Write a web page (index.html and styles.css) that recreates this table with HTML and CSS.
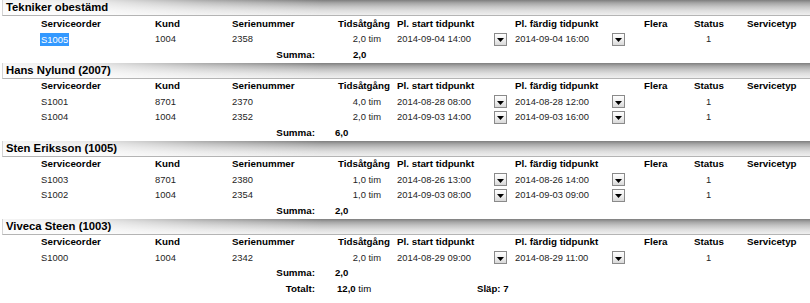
FILE: index.html
```html
<!DOCTYPE html>
<html lang="sv">
<head>
<meta charset="utf-8">
<title>Servicerapport</title>
<link rel="stylesheet" href="styles.css">
</head>
<body>
<div class="report">

  <section class="group">
    <div class="group-title">Tekniker obestämd</div>
    <div class="row head">
      <span class="c-order">Serviceorder</span><span class="c-kund">Kund</span><span class="c-serie">Serienummer</span><span class="c-tid">Tidsåtgång</span><span class="c-start">Pl. start tidpunkt</span><span class="c-fard">Pl. färdig tidpunkt</span><span class="c-flera">Flera</span><span class="c-status">Status</span><span class="c-typ">Servicetyp</span>
    </div>
    <div class="row">
      <span class="c-order"><span class="selected">S1005</span></span><span class="c-kund">1004</span><span class="c-serie">2358</span><span class="c-tid">2,0 tim</span><span class="c-start">2014-09-04 14:00</span><span class="c-btn1"><span class="dd"><svg viewBox="0 0 7 4" width="7" height="4"><path d="M0 0h7L3.5 4z"/></svg></span></span><span class="c-fard">2014-09-04 16:00</span><span class="c-btn2"><span class="dd"><svg viewBox="0 0 7 4" width="7" height="4"><path d="M0 0h7L3.5 4z"/></svg></span></span><span class="c-status">1</span>
    </div>
    <div class="row sum">
      <span class="c-label">Summa:</span><span class="c-val shift">2,0</span>
    </div>
  </section>

  <section class="group">
    <div class="group-title">Hans Nylund (2007)</div>
    <div class="row head">
      <span class="c-order">Serviceorder</span><span class="c-kund">Kund</span><span class="c-serie">Serienummer</span><span class="c-tid">Tidsåtgång</span><span class="c-start">Pl. start tidpunkt</span><span class="c-fard">Pl. färdig tidpunkt</span><span class="c-flera">Flera</span><span class="c-status">Status</span><span class="c-typ">Servicetyp</span>
    </div>
    <div class="row">
      <span class="c-order">S1001</span><span class="c-kund">8701</span><span class="c-serie">2370</span><span class="c-tid">4,0 tim</span><span class="c-start">2014-08-28 08:00</span><span class="c-btn1"><span class="dd"><svg viewBox="0 0 7 4" width="7" height="4"><path d="M0 0h7L3.5 4z"/></svg></span></span><span class="c-fard">2014-08-28 12:00</span><span class="c-btn2"><span class="dd"><svg viewBox="0 0 7 4" width="7" height="4"><path d="M0 0h7L3.5 4z"/></svg></span></span><span class="c-status">1</span>
    </div>
    <div class="row">
      <span class="c-order">S1004</span><span class="c-kund">1004</span><span class="c-serie">2352</span><span class="c-tid">2,0 tim</span><span class="c-start">2014-09-03 14:00</span><span class="c-btn1"><span class="dd"><svg viewBox="0 0 7 4" width="7" height="4"><path d="M0 0h7L3.5 4z"/></svg></span></span><span class="c-fard">2014-09-03 16:00</span><span class="c-btn2"><span class="dd"><svg viewBox="0 0 7 4" width="7" height="4"><path d="M0 0h7L3.5 4z"/></svg></span></span><span class="c-status">1</span>
    </div>
    <div class="row sum">
      <span class="c-label">Summa:</span><span class="c-val">6,0</span>
    </div>
  </section>

  <section class="group">
    <div class="group-title">Sten Eriksson (1005)</div>
    <div class="row head">
      <span class="c-order">Serviceorder</span><span class="c-kund">Kund</span><span class="c-serie">Serienummer</span><span class="c-tid">Tidsåtgång</span><span class="c-start">Pl. start tidpunkt</span><span class="c-fard">Pl. färdig tidpunkt</span><span class="c-flera">Flera</span><span class="c-status">Status</span><span class="c-typ">Servicetyp</span>
    </div>
    <div class="row">
      <span class="c-order">S1003</span><span class="c-kund">8701</span><span class="c-serie">2380</span><span class="c-tid">1,0 tim</span><span class="c-start">2014-08-26 13:00</span><span class="c-btn1"><span class="dd"><svg viewBox="0 0 7 4" width="7" height="4"><path d="M0 0h7L3.5 4z"/></svg></span></span><span class="c-fard">2014-08-26 14:00</span><span class="c-btn2"><span class="dd"><svg viewBox="0 0 7 4" width="7" height="4"><path d="M0 0h7L3.5 4z"/></svg></span></span><span class="c-status">1</span>
    </div>
    <div class="row">
      <span class="c-order">S1002</span><span class="c-kund">1004</span><span class="c-serie">2354</span><span class="c-tid">1,0 tim</span><span class="c-start">2014-09-03 08:00</span><span class="c-btn1"><span class="dd"><svg viewBox="0 0 7 4" width="7" height="4"><path d="M0 0h7L3.5 4z"/></svg></span></span><span class="c-fard">2014-09-03 09:00</span><span class="c-btn2"><span class="dd"><svg viewBox="0 0 7 4" width="7" height="4"><path d="M0 0h7L3.5 4z"/></svg></span></span><span class="c-status">1</span>
    </div>
    <div class="row sum">
      <span class="c-label">Summa:</span><span class="c-val">2,0</span>
    </div>
  </section>

  <section class="group">
    <div class="group-title">Viveca Steen (1003)</div>
    <div class="row head">
      <span class="c-order">Serviceorder</span><span class="c-kund">Kund</span><span class="c-serie">Serienummer</span><span class="c-tid">Tidsåtgång</span><span class="c-start">Pl. start tidpunkt</span><span class="c-fard">Pl. färdig tidpunkt</span><span class="c-flera">Flera</span><span class="c-status">Status</span><span class="c-typ">Servicetyp</span>
    </div>
    <div class="row">
      <span class="c-order">S1000</span><span class="c-kund">1004</span><span class="c-serie">2342</span><span class="c-tid">2,0 tim</span><span class="c-start">2014-08-29 09:00</span><span class="c-btn1"><span class="dd"><svg viewBox="0 0 7 4" width="7" height="4"><path d="M0 0h7L3.5 4z"/></svg></span></span><span class="c-fard">2014-08-29 11:00</span><span class="c-btn2"><span class="dd"><svg viewBox="0 0 7 4" width="7" height="4"><path d="M0 0h7L3.5 4z"/></svg></span></span><span class="c-status">1</span>
    </div>
    <div class="row sum">
      <span class="c-label">Summa:</span><span class="c-val">2,0</span>
    </div>
    <div class="row sum">
      <span class="c-label">Totalt:</span><span class="c-val total"><b>12,0</b> tim</span><span class="c-slap"><b>Släp:</b> <b>7</b></span>
    </div>
  </section>

</div>
</body>
</html>
```

FILE: styles.css
```css
html, body {
  margin: 0;
  padding: 0;
  background: #ffffff;
}

body {
  font-family: "Liberation Sans", Arial, sans-serif;
  color: #1e1e1e;
  width: 810px;
  height: 303px;
  overflow: hidden;
}

.report {
  padding-left: 2px;
}

.group-title {
  height: 16px;
  box-sizing: border-box;
  padding-left: 3px;
  font-size: 11.3px;
  font-weight: bold;
  color: #000;
  line-height: 15px;
  border-left: 1px solid #d4d4d4;
  border-bottom: 1px solid #b4b4b4;
  background:
    linear-gradient(to right, rgba(255,255,255,0.92) 0px, rgba(255,255,255,0.8) 90px, rgba(255,255,255,0.35) 200px, rgba(255,255,255,0) 320px),
    linear-gradient(to bottom, #7e7e7e 0%, #a6a6a6 20%, #c6c6c6 45%, #dedede 70%, #efefef 100%);
}

.row {
  display: grid;
  grid-template-columns: 39px 114px 77px 98px 59px 8px 97px 21px 97px 32px 50px 29px 24px 1fr;
  height: 15.5px;
  align-items: center;
  font-size: 9.4px;
  line-height: 12px;
  white-space: nowrap;
}

.row.head {
  font-size: 9.8px;
  font-weight: bold;
  color: #000;
}

.c-order { grid-column: 2; }
.c-kund { grid-column: 3; }
.c-serie { grid-column: 4; }
.c-tid { grid-column: 5; text-align: right; padding-right: 8px; }
.head .c-tid { padding-right: 0; margin-right: -1px; }
.c-start { grid-column: 7; }
.c-btn1 { grid-column: 8; }
.c-fard { grid-column: 9; }
.c-btn2 { grid-column: 10; }
.c-flera { grid-column: 11; }
.c-status { grid-column: 12; text-align: center; }
.c-typ { grid-column: 14; }

.c-label {
  grid-column: 4;
  text-align: right;
  padding-right: 15px;
  font-weight: bold;
  color: #000;
  font-size: 9.8px;
}

.c-val {
  grid-column: 5 / span 2;
  padding-left: 5px;
  font-weight: bold;
  color: #000;
  font-size: 9.6px;
}

.c-val.total { font-weight: normal; padding-left: 7px; }
.c-val.shift { padding-left: 23px; }

.c-slap {
  grid-column: 7 / span 2;
  padding-left: 80px;
  color: #000;
  font-size: 9.6px;
}

.selected {
  background: #3399ff;
  color: #ffffff;
  padding: 0 1px;
  margin-left: -1px;
  display: inline-block;
  line-height: 13px;
}

.dd {
  display: flex;
  align-items: center;
  justify-content: center;
  width: 13px;
  height: 13px;
  box-sizing: border-box;
  border: 1px solid #8a8a8a;
  background: linear-gradient(to bottom, #fefefe 0%, #ececec 60%, #d8d8d8 100%);
  padding-top: 2px;
}

.dd svg {
  display: block;
  fill: #000;
}
```
